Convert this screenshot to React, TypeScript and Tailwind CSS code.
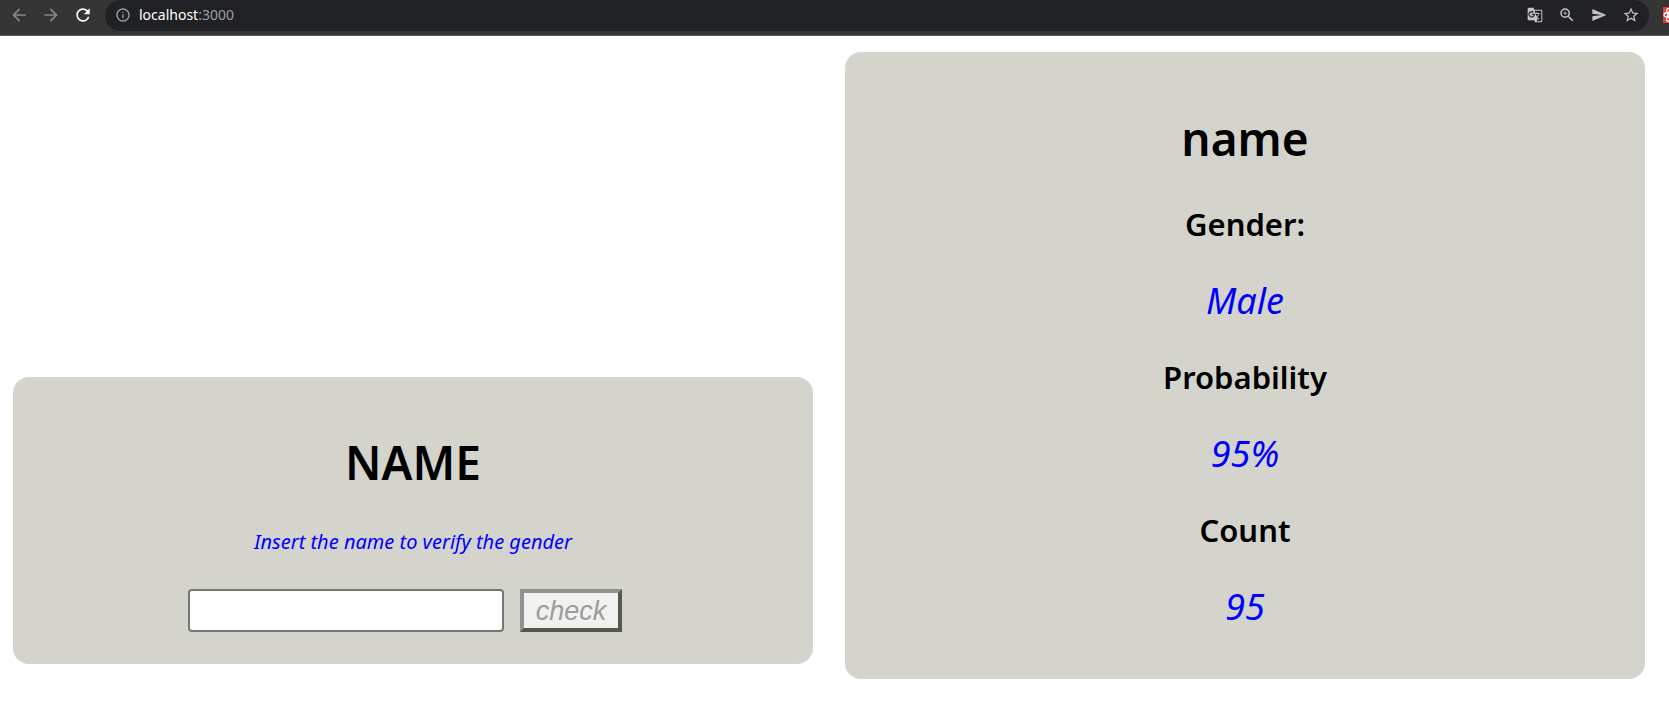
import { useState } from "react";
import { MdArrowBack, MdArrowForward, MdRefresh, MdInfoOutline, MdGTranslate, MdZoomIn, MdSend, MdStarBorder } from "react-icons/md";

const results = [
  { label: "Gender:", value: "Male" },
  { label: "Probability", value: "95%" },
  { label: "Count", value: "95" },
];

function BrowserBar() {
  return (
    <header className="flex h-9 items-start overflow-hidden border-b border-[#5c5c5c] bg-[#353535]">
      <nav className="flex h-[30px] shrink-0 items-center gap-3 pl-[9px] text-xl text-[#888888]" aria-label="Browser">
        <button type="button" aria-label="Back"><MdArrowBack /></button>
        <button type="button" aria-label="Forward"><MdArrowForward /></button>
        <button type="button" aria-label="Reload" className="text-white"><MdRefresh /></button>
      </nav>
      <div className="ml-3 flex h-[31px] min-w-0 flex-1 items-center rounded-full bg-[#202124] pr-[9px] pb-[2px] pl-[10px] text-[#9aa0a6]">
        <MdInfoOutline className="size-4 shrink-0" />
        <p className="ml-2 flex-1 text-sm leading-5"><span className="text-white">localhost</span>:3000</p>
        <div className="flex items-center gap-[14px] text-lg text-[#c4c4c4]">
          <button type="button" aria-label="Translate" className="flex size-[18px] items-center justify-center text-base"><MdGTranslate /></button>
          <button type="button" aria-label="Zoom"><MdZoomIn /></button>
          <button type="button" aria-label="Send" className="flex size-[18px] items-center justify-center text-base"><MdSend /></button>
          <button type="button" aria-label="Bookmark"><MdStarBorder /></button>
        </div>
      </div>
      <div className="mt-[7px] ml-[14px] h-4 w-[6px] shrink-0 overflow-hidden bg-[#dc4437]">
        <svg viewBox="0 0 16 16" className="size-4" fill="none" stroke="white" strokeWidth="1.3" aria-hidden="true">
          <ellipse cx="8" cy="8" rx="7" ry="2.8" />
          <ellipse cx="8" cy="8" rx="7" ry="2.8" transform="rotate(60 8 8)" />
          <ellipse cx="8" cy="8" rx="7" ry="2.8" transform="rotate(120 8 8)" />
        </svg>
      </div>
    </header>
  );
}

export default function App() {
  const [name, setName] = useState("");
  return (
    <div className="min-h-screen bg-white font-['Noto_Sans',sans-serif] text-black">
      <BrowserBar />
      <main className="flex items-end gap-8 pt-4 pr-6 pl-[13px]">
        <section className="mb-[15px] flex flex-1 flex-col items-center rounded-2xl bg-[#d4d4cc] pt-[61px] pb-8">
          <h1 className="text-[46px] leading-[48px] font-semibold">NAME</h1>
          <label htmlFor="name" className="mt-[42px] text-[20px] leading-7 text-[#0000ff] italic">Insert the name to verify the gender</label>
          <form className="mt-[33px] mr-4 flex gap-4" onSubmit={(e) => e.preventDefault()}>
            <input
              id="name"
              type="text"
              value={name}
              onChange={(e) => setName(e.target.value)}
              className="h-[43px] w-[316px] rounded border-2 border-[#767676] bg-white px-2 text-2xl"
            />
            <button
              type="submit"
              disabled={name === ""}
              className="h-[43px] w-[102px] border-4 border-t-[#92928e] border-r-[#57574f] border-b-[#57574f] border-l-[#92928e] bg-[#f1f1ef] font-['Liberation_Sans',sans-serif] text-[27px] leading-[34px] text-[#9d9d9b] italic"
            >
              check
            </button>
          </form>
        </section>
        <section className="flex flex-1 flex-col items-center rounded-2xl bg-[#d4d4cc] pt-[62px] pb-[50px]">
          <h2 className="text-[46px] leading-[48px] font-semibold">name</h2>
          <dl className="mt-10 flex flex-col gap-8 text-center">
            {results.map((r) => (
              <div key={r.label} className="flex flex-col gap-8">
                <dt className="text-[31px] leading-[44px] font-semibold">{r.label}</dt>
                <dd className="text-[36px] leading-[45px] text-[#0000ff] italic">{r.value}</dd>
              </div>
            ))}
          </dl>
        </section>
      </main>
    </div>
  );
}
